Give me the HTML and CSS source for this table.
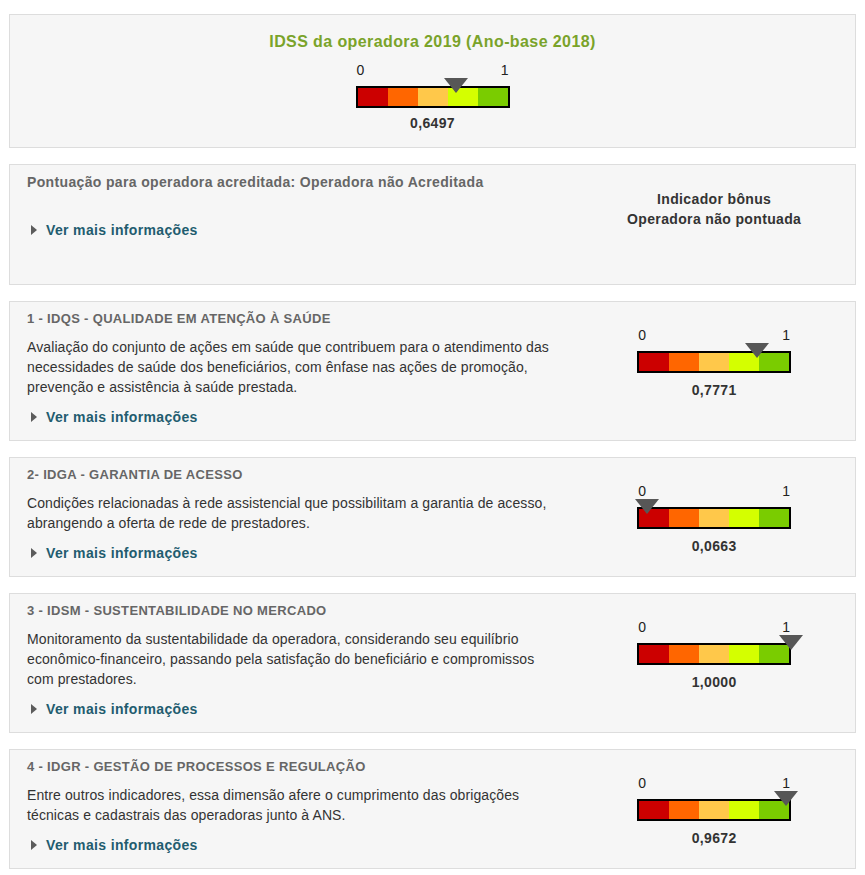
FILE: index.html
```html
<!DOCTYPE html>
<html lang="pt-BR">
<head>
<meta charset="utf-8">
<title>IDSS da operadora</title>
<link rel="stylesheet" href="styles.css">
</head>
<body>
<div class="page">
  <section class="panel panel-main">
    <h1 class="main-title">IDSS da operadora 2019 (Ano-base 2018)</h1>
    <div class="gauge gauge-main">
      <div class="gauge-labels"><span>0</span><span>1</span></div>
      <div class="gauge-bar">
        <span class="seg s1"></span><span class="seg s2"></span><span class="seg s3"></span><span class="seg s4"></span><span class="seg s5"></span>
        <span class="gauge-marker" style="--v:0.6497"></span>
      </div>
      <div class="gauge-value">0,6497</div>
    </div>
  </section>

  <section class="panel panel-bonus">
    <div class="col-left">
      <h2 class="bonus-title">Pontuação para operadora acreditada: Operadora não Acreditada</h2>
      <a class="more more-bonus" href="#"><span class="caret"></span>Ver mais informações</a>
    </div>
    <div class="col-right bonus-right">
      <div>Indicador bônus</div>
      <div>Operadora não pontuada</div>
    </div>
  </section>

  <section class="panel">
    <div class="col-left">
      <h3 class="sec-title">1 - IDQS - QUALIDADE EM ATENÇÃO À SAÚDE</h3>
      <p class="desc">Avaliação do conjunto de ações em saúde que contribuem para o atendimento das necessidades de saúde dos beneficiários, com ênfase nas ações de promoção, prevenção e assistência à saúde prestada.</p>
      <a class="more" href="#"><span class="caret"></span>Ver mais informações</a>
    </div>
    <div class="col-right">
      <div class="gauge">
        <div class="gauge-labels"><span>0</span><span>1</span></div>
        <div class="gauge-bar">
          <span class="seg s1"></span><span class="seg s2"></span><span class="seg s3"></span><span class="seg s4"></span><span class="seg s5"></span>
          <span class="gauge-marker" style="--v:0.7771"></span>
        </div>
        <div class="gauge-value">0,7771</div>
      </div>
    </div>
  </section>

  <section class="panel">
    <div class="col-left">
      <h3 class="sec-title">2- IDGA - GARANTIA DE ACESSO</h3>
      <p class="desc">Condições relacionadas à rede assistencial que possibilitam a garantia de acesso, abrangendo a oferta de rede de prestadores.</p>
      <a class="more" href="#"><span class="caret"></span>Ver mais informações</a>
    </div>
    <div class="col-right">
      <div class="gauge">
        <div class="gauge-labels"><span>0</span><span>1</span></div>
        <div class="gauge-bar">
          <span class="seg s1"></span><span class="seg s2"></span><span class="seg s3"></span><span class="seg s4"></span><span class="seg s5"></span>
          <span class="gauge-marker" style="--v:0.0663"></span>
        </div>
        <div class="gauge-value">0,0663</div>
      </div>
    </div>
  </section>

  <section class="panel">
    <div class="col-left">
      <h3 class="sec-title">3 - IDSM - SUSTENTABILIDADE NO MERCADO</h3>
      <p class="desc">Monitoramento da sustentabilidade da operadora, considerando seu equilíbrio econômico-financeiro, passando pela satisfação do beneficiário e compromissos com prestadores.</p>
      <a class="more" href="#"><span class="caret"></span>Ver mais informações</a>
    </div>
    <div class="col-right">
      <div class="gauge">
        <div class="gauge-labels"><span>0</span><span>1</span></div>
        <div class="gauge-bar">
          <span class="seg s1"></span><span class="seg s2"></span><span class="seg s3"></span><span class="seg s4"></span><span class="seg s5"></span>
          <span class="gauge-marker" style="--v:1"></span>
        </div>
        <div class="gauge-value">1,0000</div>
      </div>
    </div>
  </section>

  <section class="panel">
    <div class="col-left">
      <h3 class="sec-title">4 - IDGR - GESTÃO DE PROCESSOS E REGULAÇÃO</h3>
      <p class="desc">Entre outros indicadores, essa dimensão afere o cumprimento das obrigações técnicas e cadastrais das operadoras junto à ANS.</p>
      <a class="more" href="#"><span class="caret"></span>Ver mais informações</a>
    </div>
    <div class="col-right">
      <div class="gauge">
        <div class="gauge-labels"><span>0</span><span>1</span></div>
        <div class="gauge-bar">
          <span class="seg s1"></span><span class="seg s2"></span><span class="seg s3"></span><span class="seg s4"></span><span class="seg s5"></span>
          <span class="gauge-marker" style="--v:0.9672"></span>
        </div>
        <div class="gauge-value">0,9672</div>
      </div>
    </div>
  </section>
</div>
</body>
</html>
```

FILE: styles.css
```css
* { box-sizing: border-box; }

html, body {
  margin: 0;
  padding: 0;
  background: #ffffff;
}

body {
  font-family: "Liberation Sans", Arial, sans-serif;
  font-size: 14px;
  line-height: 20px;
  color: #333333;
}

.page {
  padding: 14px 9px 8px 9px;
  display: flex;
  flex-direction: column;
  gap: 16px;
}

.panel {
  background: #f6f6f6;
  border: 1px solid #dddddd;
  display: grid;
  grid-template-columns: 2fr 1fr;
  padding: 7px 0 13px 0;
}

/* ---------- main panel ---------- */
.panel-main {
  display: flex;
  flex-direction: column;
  align-items: center;
  padding: 17px 0 14px 0;
}

.main-title {
  margin: 0;
  font-size: 16px;
  line-height: 20px;
  font-weight: bold;
  letter-spacing: 0.025em;
  color: #7aa32a;
}

.gauge-main .gauge-labels { margin-top: 8px; }
.gauge-main .gauge-bar { margin-top: 6px; }
.gauge-main .gauge-value { margin-top: 5px; }

/* ---------- columns ---------- */
.col-left {
  padding: 0 20px 0 17px;
}

.col-right {
  display: flex;
  flex-direction: column;
  align-items: center;
}

/* ---------- bonus panel ---------- */
.panel-bonus {
  min-height: 121px;
}

.bonus-title {
  margin: 0;
  font-size: 14px;
  line-height: 20px;
  font-weight: bold;
  letter-spacing: 0.025em;
  color: #666666;
}

.bonus-right {
  margin-top: 17px;
  font-weight: bold;
  letter-spacing: 0.025em;
  color: #333333;
  text-align: center;
}

/* ---------- sections ---------- */
.sec-title {
  margin: 0;
  font-size: 13px;
  line-height: 20px;
  font-weight: bold;
  letter-spacing: 0.025em;
  color: #666666;
}

.desc {
  margin: 8px 0 0 0;
  font-size: 14px;
  line-height: 20px;
  letter-spacing: 0.1px;
  color: #333333;
}

.more {
  display: flex;
  align-items: center;
  margin-top: 10px;
  font-size: 14px;
  line-height: 20px;
  font-weight: bold;
  letter-spacing: 0.025em;
  color: #225c6f;
  text-decoration: none;
}

.more.more-bonus {
  margin-top: 28px;
}

.caret {
  width: 0;
  height: 0;
  margin-left: 4px;
  margin-right: 9px;
  border-left: 6px solid #5c5c5c;
  border-top: 5px solid transparent;
  border-bottom: 5px solid transparent;
}

/* ---------- gauge ---------- */
.gauge {
  width: 154px;
  display: flex;
  flex-direction: column;
}

.col-right .gauge {
  margin-top: 16px;
}

.gauge-labels {
  display: flex;
  justify-content: space-between;
  font-size: 14px;
  line-height: 20px;
  color: #222222;
  padding: 0 1px 0 1px;
}

.gauge-bar {
  position: relative;
  display: flex;
  height: 22px;
  border: 2px solid #000000;
  margin-top: 6px;
}

.seg { flex: 1; }
.s1 { background: #cc0000; }
.s2 { background: #ff6600; }
.s3 { background: #ffc84a; }
.s4 { background: #d4ff00; }
.s5 { background: #7acc00; }

.gauge-marker {
  position: absolute;
  top: -10px;
  left: calc(var(--v) * (100% + 4px) - 2px - 12px);
  width: 0;
  height: 0;
  border-left: 12px solid transparent;
  border-right: 12px solid transparent;
  border-top: 15px solid #575757;
}

.gauge-value {
  margin-top: 7px;
  text-align: center;
  font-weight: bold;
  letter-spacing: 0.025em;
  color: #333333;
}
```
